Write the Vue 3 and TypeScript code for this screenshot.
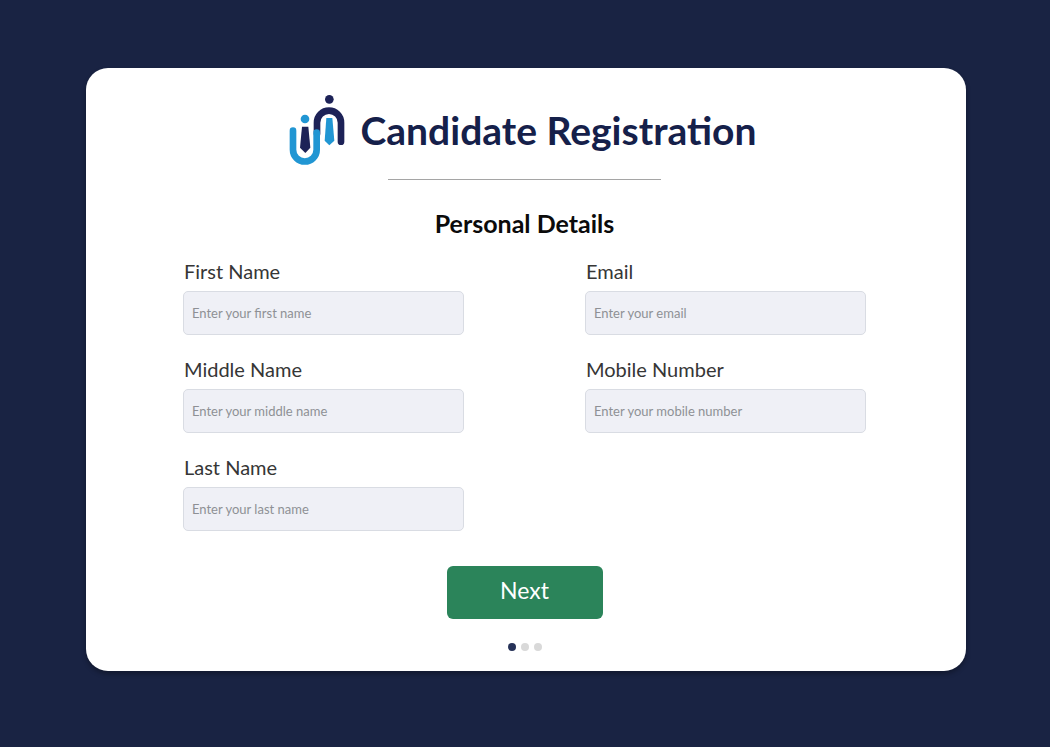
<script setup lang="ts">
import { ref } from 'vue'

interface Field {
  id: string
  label: string
  type: string
  placeholder: string
}

const columns: Field[][] = [
  [
    { id: 'first-name', label: 'First Name', type: 'text', placeholder: 'Enter your first name' },
    { id: 'middle-name', label: 'Middle Name', type: 'text', placeholder: 'Enter your middle name' },
    { id: 'last-name', label: 'Last Name', type: 'text', placeholder: 'Enter your last name' },
  ],
  [
    { id: 'email', label: 'Email', type: 'email', placeholder: 'Enter your email' },
    { id: 'mobile', label: 'Mobile Number', type: 'tel', placeholder: 'Enter your mobile number' },
  ],
]

const values = ref<Record<string, string>>({})
const step = ref(1)
const steps = [1, 2, 3]
</script>

<template>
  <main class="page">
    <form class="card" @submit.prevent>
      <header class="brand">
        <svg class="logo" viewBox="24 27 168 216" fill="none" aria-hidden="true">
          <path d="M108 146V113A36 36 0 0 1 180 113V170" stroke="#1d2257" stroke-width="20" stroke-linecap="round" />
          <path d="M36 137V194A35.5 35.5 0 0 0 107 194V143" stroke="#2196d3" stroke-width="20" stroke-linecap="round" />
          <circle cx="72" cy="102" r="13" fill="#2196d3" />
          <circle cx="145" cy="43" r="13" fill="#1d2257" />
          <path d="M63 125H82L88 188L73 204L57 188Z" fill="#1d2257" />
          <path d="M136 99H154L160 167L145 181L131 167Z" fill="#2196d3" />
        </svg>
        <h1 class="title">Candidate Registration</h1>
      </header>
      <hr class="rule" />
      <h2 class="subtitle">Personal Details</h2>
      <div class="columns">
        <div v-for="(column, i) in columns" :key="i" class="column">
          <div v-for="field in column" :key="field.id" class="field">
            <label class="label" :for="field.id">{{ field.label }}</label>
            <input
              :id="field.id"
              v-model="values[field.id]"
              class="input"
              :type="field.type"
              :placeholder="field.placeholder"
            />
          </div>
        </div>
      </div>
      <button class="next" type="submit">Next</button>
      <div class="dots">
        <span v-for="n in steps" :key="n" class="dot" :class="{ active: n === step }"></span>
      </div>
    </form>
  </main>
</template>

<style>
body {
  margin: 0;
  background: #192343;
}
</style>

<style scoped>
.page {
  box-sizing: border-box;
  min-height: 100vh;
  padding: 68px 84px 76px 86px;
  background: #192343;
  font-family: Lato, sans-serif;
}

.card {
  display: flex;
  flex-direction: column;
  align-items: center;
  box-sizing: border-box;
  padding: 26px 100px 20px 97px;
  border-radius: 22px;
  background: #fff;
  box-shadow: 0 3px 5px rgba(0, 0, 0, 0.3);
}

.brand {
  display: flex;
  align-items: center;
  gap: 16px;
  padding-right: 4px;
}

.logo {
  width: 56px;
  height: 72px;
}

.title {
  margin: 0;
  color: #15204a;
  font-size: 39px;
  font-weight: 700;
  line-height: 48px;
}

.rule {
  width: 40%;
  height: 1px;
  margin: 13px 0 0;
  border: 0;
  background: #a5a5a5;
}

.subtitle {
  margin: 27px 0 0;
  color: #0b0b0b;
  font-size: 25px;
  font-weight: 700;
  line-height: 32px;
}

.columns {
  display: grid;
  grid-template-columns: 1fr 1fr;
  align-self: stretch;
  column-gap: 121px;
  margin-top: 20px;
}

.column {
  display: flex;
  flex-direction: column;
  gap: 22px;
}

.field {
  display: flex;
  flex-direction: column;
  gap: 8px;
}

.label {
  padding-left: 1px;
  color: #363636;
  font-size: 20px;
  line-height: 24px;
}

.input {
  box-sizing: border-box;
  width: 100%;
  height: 44px;
  padding: 0 8px;
  border: 1px solid #d9dce3;
  border-radius: 5px;
  background: #eff0f6;
  color: #333;
  font-family: inherit;
  font-size: 13px;
}

.input::placeholder {
  color: #8e9095;
  opacity: 1;
}

.next {
  width: 156px;
  height: 53px;
  margin-top: 35px;
  padding: 0 0 6px;
  border: 0;
  border-radius: 6px;
  background: #2b845a;
  color: #fff;
  font-family: inherit;
  font-size: 23px;
}

.dots {
  display: flex;
  gap: 5px;
  margin-top: 24px;
}

.dot {
  width: 8px;
  height: 8px;
  border-radius: 50%;
  background: #d9d9d9;
}

.dot.active {
  background: #263258;
}
</style>
